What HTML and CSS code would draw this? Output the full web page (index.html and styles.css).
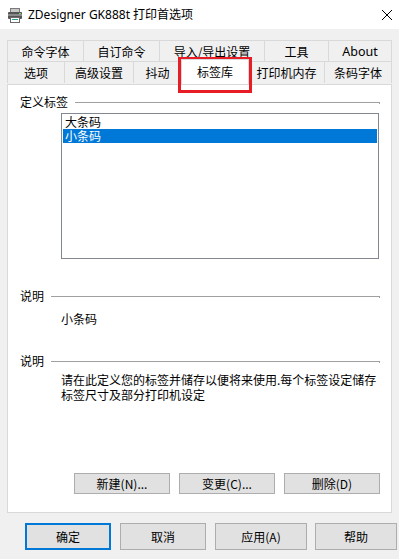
FILE: index.html
```html
<!DOCTYPE html>
<html lang="zh-CN">

<head>
    <meta charset="UTF-8">
    <meta name="viewport" content="width=device-width, initial-scale=1.0">
    <title>ZDesigner GK888t 打印首选项</title>
    <link rel="stylesheet" href="styles.css">
</head>

<body>
    <div class="window">
        <div class="titlebar">
            <svg class="app-icon" width="16" height="16" viewBox="0 0 16 16">
                <rect x="3.5" y="1.5" width="9" height="4" fill="#c8c8c8" stroke="#7a7a7a" />
                <rect x="1" y="5" width="14" height="7" rx="1" fill="#555" />
                <rect x="1" y="7" width="14" height="2" fill="#8a8a8a" />
                <rect x="3.5" y="10.5" width="9" height="5" fill="#fff" stroke="#6a6a6a" />
                <rect x="5" y="12" width="6" height="1" fill="#2a9d8f" />
                <rect x="12" y="6" width="2" height="1" fill="#7fd36b" />
            </svg>
            <span class="title">ZDesigner GK888t 打印首选项</span>
            <svg class="close" width="10" height="10" viewBox="0 0 10 10">
                <path d="M0 0L10 10M10 0L0 10" stroke="#000" stroke-width="1" />
            </svg>
        </div>

        <div class="tabs">
            <div class="tab-row back">
                <div class="tab t-font">命令字体</div>
                <div class="tab t-cmd">自订命令</div>
                <div class="tab t-io">导入/导出设置</div>
                <div class="tab t-tool">工具</div>
                <div class="tab t-about">About</div>
            </div>
            <div class="tab-row front">
                <div class="tab t-opt">选项</div>
                <div class="tab t-adv">高级设置</div>
                <div class="tab t-dither">抖动</div>
                <div class="tab t-lib active">标签库</div>
                <div class="tab t-mem">打印机内存</div>
                <div class="tab t-bar">条码字体</div>
            </div>
        </div>

        <div class="panel">
            <div class="group-head">
                <span>定义标签</span>
                <i class="rule"></i>
            </div>
            <div class="listbox">
                <div class="item">大条码</div>
                <div class="item selected">小条码</div>
            </div>

            <div class="group-head second">
                <span>说明</span>
                <i class="rule"></i>
            </div>
            <p class="value">小条码</p>

            <div class="group-head third">
                <span>说明</span>
                <i class="rule"></i>
            </div>
            <p class="desc">请在此定义您的标签并储存以便将来使用.每个标签设定储存<br>标签尺寸及部分打印机设定</p>

            <div class="actions">
                <button class="btn">新建(N)...</button>
                <button class="btn">变更(C)...</button>
                <button class="btn">删除(D)</button>
            </div>
        </div>

        <div class="footer">
            <button class="btn big default">确定</button>
            <button class="btn big">取消</button>
            <button class="btn big apply">应用(A)</button>
            <button class="btn big help">帮助</button>
        </div>
    </div>

    <div class="highlight"></div>
</body>

</html>
```

FILE: styles.css
```css
* {
    margin: 0;
    padding: 0;
    box-sizing: border-box;
}

body {
    font-family: "Noto Sans CJK SC", "Noto Sans", sans-serif;
    font-size: 12px;
    color: #000;
    background-color: #f0f0f0;
}

.window {
    width: 399px;
    height: 559px;
    background-color: #f0f0f0;
}

/* title bar */
.titlebar {
    display: flex;
    align-items: center;
    height: 29px;
    padding: 0 7px;
    background-color: #fff;
}

.app-icon {
    margin-right: 5px;
}

.title {
    font-family: "Noto Sans", "Noto Sans CJK SC", sans-serif;
    font-size: 12px;
    line-height: 16px;
}

.close {
    margin-left: auto;
}

/* tabs */
.tabs {
    margin-top: 11px;
    margin-left: 7px;
    width: 385px;
}

.tab-row {
    display: flex;
}

.tab {
    display: flex;
    justify-content: center;
    align-items: center;
    border-top: 1px solid #d9d9d9;
    border-left: 1px solid #d9d9d9;
    background-color: #f0f0f0;
    white-space: nowrap;
}

.tab:last-child {
    border-right: 1px solid #d9d9d9;
}

.back .tab {
    height: 21px;
}

.front .tab {
    height: 22px;
}

.t-font { width: 76px; }
.t-cmd { width: 76px; }
.t-io { width: 105px; }
.t-tool { width: 64px; }
.t-about { width: 64px; font-family: "Noto Sans", sans-serif; font-size: 12.5px; }

.t-opt { width: 57px; }
.t-adv { width: 69px; }
.t-dither { width: 48px; }
.t-lib { width: 68px; }
.t-mem { width: 75px; }
.t-bar { width: 68px; }

.tab.active {
    position: relative;
    z-index: 1;
    height: 25px;
    margin-top: -2px;
    border-right: 1px solid #d9d9d9;
    background-color: #fff;
    padding-bottom: 1px;
}

.tab.active + .tab {
    border-left: none;
}

/* page */
.panel {
    display: flex;
    flex-direction: column;
    margin-left: 7px;
    width: 385px;
    height: 429px;
    padding: 10px 11px 18px 12px;
    background-color: #fff;
    border: 1px solid #d9d9d9;
}

.group-head {
    display: flex;
    height: 14px;
    line-height: 14px;
}

.rule {
    flex: 1;
    height: 2px;
    margin-top: 7px;
    margin-left: 7px;
    border-top: 1px solid #a0a0a0;
    border-right: 1px solid #a0a0a0;
}

.listbox {
    width: 318px;
    height: 146px;
    margin: 4px 0 0 41px;
    padding: 1px;
    border: 1px solid #828790;
}

.item {
    height: 14px;
    line-height: 14px;
    padding-left: 2px;
}

.item.selected {
    color: #fff;
    background-color: #0078d7;
}

.group-head.second {
    margin-top: 30px;
}

.value {
    margin: 9px 0 0 41px;
    line-height: 14px;
}

.group-head.third {
    margin-top: 28px;
}

.desc {
    margin: 4px 0 0 41px;
    line-height: 15px;
}

.actions {
    display: flex;
    justify-content: flex-end;
    gap: 9px;
    margin-top: auto;
}

.btn {
    width: 96px;
    height: 21px;
    font-family: "Noto Sans CJK SC", "Noto Sans", sans-serif;
    font-size: 12px;
    line-height: 14px;
    color: #000;
    background-color: #e1e1e1;
    border: 1px solid #adadad;
}

/* dialog buttons */
.footer {
    display: flex;
    gap: 9px;
    margin-top: 10px;
    padding-left: 25px;
}

.btn.big {
    width: 86px;
    height: 27px;
}

.btn.apply {
    width: 92px;
}

.btn.help {
    width: 82px;
    margin-left: -1px;
}

.btn.default {
    border: 2px solid #0078d7;
}

/* annotation drawn over the screenshot */
.highlight {
    position: absolute;
    left: 178px;
    top: 57px;
    width: 74px;
    height: 36px;
    border: 3px solid #e81c24;
}
```
